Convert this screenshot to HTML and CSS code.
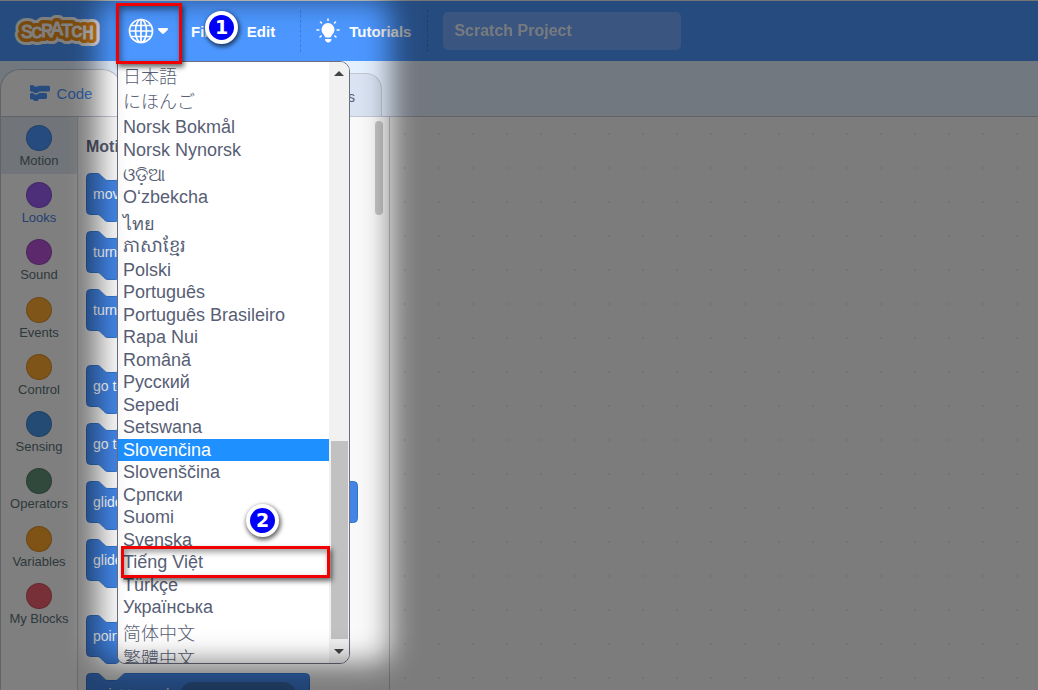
FILE: index.html
```html
<!DOCTYPE html>
<html lang="en">
<head>
  <meta charset="UTF-8">
  <meta name="viewport" content="width=device-width, initial-scale=1.0">
  <title>Scratch Project</title>
  <link rel="stylesheet" href="styles.css">
</head>
<body>
  <svg class="defs" aria-hidden="true">
    <symbol id="block" viewBox="0 0 260 49">
      <path d="M.5 4.5a4 4 0 0 1 4-4H11c2 0 3 1 4 2l3 3c1 1 2 2 4 2h7c2 0 3-1 4-2l3-3c1-1 2-2 4-2h215.500a4 4 0 0 1 4 4v33a4 4 0 0 1-4 4H40c-2 0-3 1-4 2l-3 3c-1 1-2 2-4 2h-7c-2 0-3-1-4-2l-3-3c-1-1-2-2-4-2H4.500a4 4 0 0 1-4-4z"/>
    </symbol>
    <symbol id="block-long" viewBox="0 0 272 49">
      <path d="M.5 4.5a4 4 0 0 1 4-4H11c2 0 3 1 4 2l3 3c1 1 2 2 4 2h7c2 0 3-1 4-2l3-3c1-1 2-2 4-2h227.500a4 4 0 0 1 4 4v33a4 4 0 0 1-4 4H40c-2 0-3 1-4 2l-3 3c-1 1-2 2-4 2h-7c-2 0-3-1-4-2l-3-3c-1-1-2-2-4-2H4.500a4 4 0 0 1-4-4z"/>
    </symbol>
    <symbol id="block-short" viewBox="0 0 224 49">
      <path d="M.5 4.5a4 4 0 0 1 4-4H11c2 0 3 1 4 2l3 3c1 1 2 2 4 2h7c2 0 3-1 4-2l3-3c1-1 2-2 4-2h179.500a4 4 0 0 1 4 4v33a4 4 0 0 1-4 4H40c-2 0-3 1-4 2l-3 3c-1 1-2 2-4 2h-7c-2 0-3-1-4-2l-3-3c-1-1-2-2-4-2H4.500a4 4 0 0 1-4-4z"/>
    </symbol>
  </svg>

  <header class="menu-bar">
    <a class="logo" href="#" aria-label="Scratch">
      <svg width="88" height="36" viewBox="0 0 88 36">
        <g class="logo-text">
          <text class="logo-edge" x="7 17 27 37 47 57 68" y="25 25 24 22 24 24 26">ScRATcH</text>
          <text class="logo-fill" x="7 17 27 37 47 57 68" y="25 25 24 22 24 24 26">ScRATcH</text>
          <text class="logo-letters" x="7 17 27 37 47 57 68" y="25 25 24 22 24 24 26">ScRATcH</text>
        </g>
      </svg>
    </a>

    <div class="language">
      <button class="language-button" aria-label="Language">
        <svg width="26" height="26" viewBox="0 0 26 26" fill="none" stroke="#fff" stroke-width="1.700">
          <circle cx="13" cy="13" r="11.500"/>
          <ellipse cx="13" cy="13" rx="5.500" ry="11.500"/>
          <path d="M13 1.500v23M1.500 13h23M3.500 7.500h19M3.500 18.500h19"/>
        </svg>
        <svg width="10" height="7" viewBox="0 0 10 7" fill="#fff"><path d="M1 0h8c1 0 1.300 1.200.6 2L6 5.600c-.6.500-1.400.5-2 0L.4 2C-.3 1.200 0 0 1 0z"/></svg>
      </button>
      <div class="language-menu">
        <select class="language-list" size="26" aria-label="Choose a language">
          <option class="tall" lang="ja">日本語</option>
          <option class="tall kana" lang="ja">にほんご</option>
          <option>Norsk Bokmål</option>
          <option>Norsk Nynorsk</option>
          <option class="tall indic">ଓଡ଼ିଆ</option>
          <option>Oʻzbekcha</option>
          <option class="tall">ไทย</option>
          <option class="tall">ភាសាខ្មែរ</option>
          <option>Polski</option>
          <option>Português</option>
          <option>Português Brasileiro</option>
          <option>Rapa Nui</option>
          <option>Română</option>
          <option>Русский</option>
          <option>Sepedi</option>
          <option>Setswana</option>
          <option selected>Slovenčina</option>
          <option>Slovenščina</option>
          <option>Српски</option>
          <option>Suomi</option>
          <option>Svenska</option>
          <option>Tiếng Việt</option>
          <option>Türkçe</option>
          <option>Українська</option>
          <option class="tall" lang="zh-CN">简体中文</option>
          <option class="tall" lang="zh-TW">繁體中文</option>
        </select>
        <div class="scrollbar" aria-hidden="true">
          <svg width="10" height="5" viewBox="0 0 10 5"><path d="M5 0l5 5H0z"/></svg>
          <div class="scroll-thumb"></div>
          <svg width="10" height="5" viewBox="0 0 10 5"><path d="M0 0h10L5 5z"/></svg>
        </div>
      </div>
    </div>

    <button class="menu-item">File</button>
    <button class="menu-item">Edit</button>
    <span class="divider"></span>
    <button class="menu-item tutorials">
      <svg width="24" height="26" viewBox="0 0 24 26">
        <path fill="#fff" d="M12 5a6.500 6.500 0 0 0-6.500 6.500c0 2.500 1.300 4 2.500 5.500.7.900 1 2.500 2 2.500h4c1 0 1.300-1.600 2-2.500 1.200-1.500 2.500-3 2.500-5.500A6.500 6.500 0 0 0 12 5zM9 21h6.500c0 2-1.500 3.500-3.200 3.500S9 23 9 21z"/>
        <path stroke="#fff" stroke-width="1.600" stroke-linecap="round" d="M12 1v1.500M4.500 4l1 1M19.500 4l-1 1M1 12h1.800M21.200 12H23M4 19l1.200-1M20 19l-1.200-1"/>
      </svg>
      Tutorials
    </button>
    <span class="divider"></span>
    <input class="project-title" type="text" value="Scratch Project" aria-label="Project title">
  </header>

  <nav class="tabs">
    <button class="tab active">
      <svg width="20" height="16" viewBox="0 0 20 16" fill="currentColor">
        <path d="M0 1.500C0 .7.700 0 1.500 0H3l1.500 1.500h3L9 .8h9.500c.8 0 1.500.4 1.500 1.200v3c0 .8-.7 1.500-1.500 1.500H9L7.500 8h-3L3 6.800H1.500C.7 6.800 0 6 0 5.300z"/>
        <path d="M0 9.500C0 8.700.700 8 1.500 8H3l1.500 1.500h3L9 8h6.500c.8 0 1.500.7 1.500 1.500v3c0 .8-.7 1.500-1.500 1.500H9l-1.500 2h-3L3 14.500H1.500C.7 14.500 0 14 0 13.300z"/>
      </svg>
      Code
    </button>
    <button class="tab">Costumes</button>
    <button class="tab">Sounds</button>
  </nav>

  <main class="editor">
    <div class="categories">
      <button class="category active"><span class="dot motion"></span>Motion</button>
      <button class="category hovered"><span class="dot looks"></span>Looks</button>
      <button class="category"><span class="dot sound"></span>Sound</button>
      <button class="category"><span class="dot events"></span>Events</button>
      <button class="category"><span class="dot control"></span>Control</button>
      <button class="category"><span class="dot sensing"></span>Sensing</button>
      <button class="category"><span class="dot operators"></span>Operators</button>
      <button class="category"><span class="dot variables"></span>Variables</button>
      <button class="category"><span class="dot my-blocks"></span>My Blocks</button>
    </div>

    <section class="palette">
      <div class="blocks">
        <h2>Motion</h2>
        <div class="group">
          <div class="block"><svg width="260" height="49"><use href="#block"/></svg><span>move</span></div>
          <div class="block"><svg width="260" height="49"><use href="#block"/></svg><span>turn</span></div>
          <div class="block"><svg width="260" height="49"><use href="#block"/></svg><span>turn</span></div>
        </div>
        <div class="group">
          <div class="block"><svg width="260" height="49"><use href="#block"/></svg><span>go to</span></div>
          <div class="block"><svg width="260" height="49"><use href="#block"/></svg><span>go to</span></div>
          <div class="block"><svg width="272" height="49"><use href="#block-long"/></svg><span>glide</span></div>
          <div class="block"><svg width="260" height="49"><use href="#block"/></svg><span>glide</span></div>
        </div>
        <div class="group">
          <div class="block"><svg width="260" height="49"><use href="#block"/></svg><span>point</span></div>
          <div class="block"><svg width="224" height="49"><use href="#block-short"/></svg><span>point towards <i class="slot"></i></span></div>
        </div>
      </div>
      <div class="palette-scroll"></div>
    </section>

    <section class="workspace"></section>
  </main>

  <div class="spotlight"></div>

  <div class="frame frame-language"></div>
  <div class="badge badge-one">1</div>
  <div class="frame frame-vietnamese"></div>
  <div class="badge badge-two">2</div>
</body>
</html>
```

FILE: styles.css
```css
* {
  box-sizing: border-box;
}

body {
  position: relative;
  display: flex;
  flex-direction: column;
  height: 100vh;
  margin: 0;
  overflow: hidden;
  font-family: "Liberation Sans", Arial, sans-serif;
  color: #575e75;
  background: #e5f0ff;
}

button {
  padding: 0;
  border: none;
  background: none;
  font: inherit;
  color: inherit;
  cursor: pointer;
}

.defs {
  position: absolute;
  width: 0;
  height: 0;
}

/* Menu bar */

.menu-bar {
  display: flex;
  align-items: center;
  flex: none;
  height: 61px;
  border-top: 1px solid #e8e8e8;
  background: #4c97ff;
  color: #fff;
}

.logo {
  display: flex;
  margin: 0 14px;
}

.logo-text {
  font-family: "Liberation Mono", monospace;
  font-size: 20px;
  stroke-linejoin: round;
}

.logo-edge {
  fill: #fff;
  stroke: #fff;
  stroke-width: 14px;
}

.logo-fill {
  fill: #f09018;
  stroke: #f09018;
  stroke-width: 8px;
}

.logo-letters {
  fill: #fff;
  stroke: #fff;
  stroke-width: 1px;
}

.language {
  position: relative;
  display: flex;
  align-self: stretch;
  width: 68px;
}

.language-button {
  display: flex;
  align-items: center;
  gap: 4px;
  padding-left: 12px;
}

.language-menu {
  position: absolute;
  z-index: 1;
  top: 60px;
  left: 1px;
  display: flex;
  width: 233px;
  height: calc(100vh - 87px);
  border: 1px solid #6b6f80;
  border-radius: 0 10px 10px 8px;
  background: #fff;
  overflow: hidden;
}

.language-list {
  flex: 1;
  min-width: 0;
  height: 100%;
  padding: 0;
  border: none;
  outline: none;
  overflow: hidden;
  background: #fff;
  color: #575e75;
  font-family: "Liberation Sans", "Noto Sans CJK JP", sans-serif;
  font-size: 18px;
}

.language-list option {
  height: 1.25em;
  min-height: 0;
  padding: 1px 5px 0;
}

.language-list .tall {
  height: 25px;
  padding-top: 0;
  font-weight: 300;
}

.language-list .kana {
  height: 29px;
}

.language-list .indic {
  padding-top: 4px;
}

.language-list option:checked {
  background: #1e90ff linear-gradient(#1e90ff, #1e90ff);
  -webkit-text-fill-color: #fff;
}

.scrollbar {
  display: flex;
  flex-direction: column;
  align-items: center;
  justify-content: space-between;
  width: 20px;
  padding: 9px 0;
  background: #f1f1f1;
  fill: #444;
}

.scroll-thumb {
  align-self: stretch;
  height: 34%;
  margin: auto 1px 10px 2px;
  background: #c1c1c1;
}

.menu-item {
  padding: 0 8px;
  font-size: 15px;
  font-weight: bold;
}

.language + .menu-item {
  padding-left: 7px;
}

.menu-item + .menu-item {
  margin-left: 14px;
}

.divider {
  height: 42px;
  margin-left: 17px;
  border-left: 1px dashed #3c7cd8;
}

.menu-item.tutorials {
  display: flex;
  align-items: center;
  gap: 9px;
  padding: 0 16px 0 15px;
}

.tutorials + .divider {
  margin-left: 0;
}

.project-title {
  width: 238px;
  height: 38px;
  margin-left: 15px;
  padding: 0 11px;
  border: none;
  border-radius: 5px;
  background: #79aeff;
  color: #fff;
  opacity: 0.9;
  font-family: inherit;
  font-size: 16px;
  font-weight: bold;
}

/* Tabs */

.tabs {
  display: flex;
  align-items: flex-end;
  flex: none;
  height: 56px;
  border-bottom: 1px solid #c4c6d2;
}

.tab {
  display: flex;
  align-items: center;
  justify-content: flex-end;
  height: 43px;
  width: 133px;
  padding: 4px 26px 0 0;
  border: 1px solid #c4c6d2;
  border-bottom: none;
  border-radius: 16px 16px 0 0;
  background: #d9e3f2;
  font-size: 14px;
}

.tab.active {
  justify-content: center;
  gap: 7px;
  width: 122px;
  height: 47px;
  padding: 0;
  border-radius: 20px 20px 0 0;
  background: #fff;
  color: #4c97ff;
  font-size: 15px;
}

.tab + .tab {
  margin-left: -3px;
}

/* Editor */

.editor {
  display: flex;
  flex: 1;
  min-height: 0;
  border-left: 1px solid #c4c6d2;
}

.categories {
  display: grid;
  grid-template-rows: repeat(10, 1fr);
  width: 77px;
  border-right: 1px solid #d0d0d0;
  background: #fff;
}

.category {
  display: flex;
  flex-direction: column;
  align-items: center;
  justify-content: center;
  gap: 2px;
  padding-top: 2px;
  font-size: 13px;
  line-height: 16px;
  color: #5c7277;
}

.category.active {
  background: #e2e9f0;
}

.category.hovered {
  color: #4c7fe0;
}

.dot {
  width: 26px;
  height: 26px;
  border: 1px solid rgba(0, 0, 0, 0.15);
  border-radius: 50%;
}

.motion { background: #4c97ff; }
.looks { background: #9a5cf0; }
.sound { background: #b854d8; }
.events { background: #ffab32; }
.control { background: #ffa832; }
.sensing { background: #4896e8; }
.operators { background: #629078; }
.variables { background: #ffa42c; }
.my-blocks { background: #f06070; }

.palette {
  display: flex;
  justify-content: space-between;
  width: 312px;
  padding: 4px 6px 0 8px;
  border-right: 1px solid #c8c8c8;
  background: #f9f9f9;
  overflow: hidden;
}

.blocks h2 {
  margin: 17px 0;
  font-size: 16px;
  line-height: 18px;
}

.group {
  display: flex;
  flex-direction: column;
  gap: 9px;
  margin-bottom: 27px;
}

.block {
  display: grid;
  height: 49px;
  fill: #4285e6;
  stroke: #3373cc;
}

.block svg,
.block span {
  grid-area: 1 / 1;
}

.block span {
  padding-left: 7px;
  color: #fff;
  font-size: 14px;
  line-height: 42px;
}

.slot {
  display: inline-block;
  width: 116px;
  height: 26px;
  border-radius: 13px;
  background: #3a6cb0;
  vertical-align: middle;
}

.palette-scroll {
  width: 8px;
  height: 94px;
  border-radius: 4px;
  background: #c6c6c6;
}

.workspace {
  flex: 1;
  background: #f9f9f9 radial-gradient(circle, #e6e6e8 1px, transparent 1px) 32px 0 / 34px 34px;
}

/* Dims everything outside the area being explained */

.spotlight {
  position: absolute;
  z-index: 2;
  top: 0;
  bottom: 28px;
  left: 98px;
  width: 292px;
  border-radius: 16px;
  box-shadow: 0 0 0 1200px rgba(0, 0, 0, 0.5);
  filter: blur(14px);
  pointer-events: none;
}

.frame {
  position: absolute;
  z-index: 3;
  border: 3px solid #f00000;
  box-shadow: 2px 3px 5px rgba(0, 0, 0, 0.6), inset 2px 3px 6px rgba(0, 0, 0, 0.4);
  pointer-events: none;
}

.frame-language {
  top: 3px;
  left: 116px;
  width: 66px;
  height: 61px;
}

.frame-vietnamese {
  top: 546px;
  left: 121px;
  width: 209px;
  height: 32px;
}

.badge {
  position: absolute;
  z-index: 3;
  width: 33px;
  height: 33px;
  border: 4px solid #fff;
  border-radius: 50%;
  background: #0000f8;
  box-shadow: 1px 2px 4px 1px rgba(0, 0, 0, 0.6);
  color: #fff;
  font-family: "DejaVu Sans", sans-serif;
  font-size: 19px;
  font-weight: bold;
  line-height: 25px;
  text-align: center;
}

.badge-one {
  top: 11px;
  left: 205px;
}

.badge-two {
  top: 504px;
  left: 246px;
}
```
